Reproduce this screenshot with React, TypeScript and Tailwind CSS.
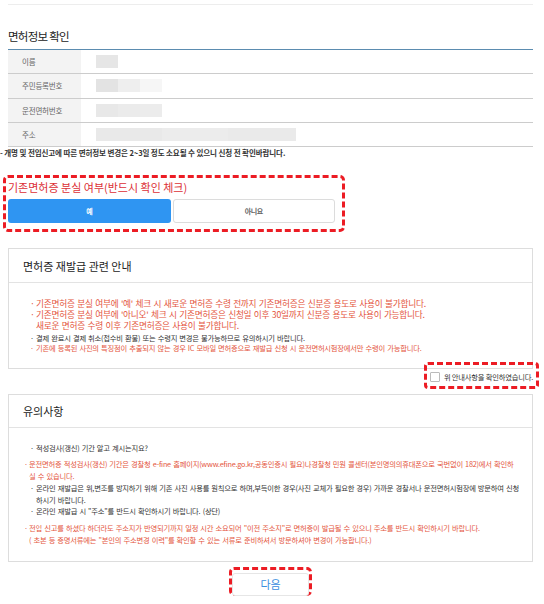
import type { ReactNode } from 'react';

const ROWS = [
  { label: '이름', blocks: [{ w: 22, cls: 'bg-[#e6e6e6]' }] },
  {
    label: '주민등록번호',
    blocks: [
      { w: 22, cls: 'bg-[#e3e3e3]' },
      { w: 22, cls: 'bg-[#eeeeee]' },
      { w: 22, cls: 'bg-[#f6f6f6]' },
    ],
  },
  {
    label: '운전면허번호',
    blocks: [
      { w: 22, cls: 'bg-[#e8e8e8]' },
      { w: 22, cls: 'bg-[#ebebeb]' },
      { w: 22, cls: 'bg-[#ececec]' },
    ],
  },
  {
    label: '주소',
    blocks: [
      { w: 66, cls: 'bg-[#e9e9e9]' },
      { w: 66, cls: 'bg-[#ececec]' },
      { w: 68, cls: 'bg-[#eaeaea]' },
    ],
  },
];

const SMALL = 'text-[7.3px] tracking-[-0.22px]';
const BIG_RED = 'text-[8.7px] leading-[11px] tracking-[-0.25px] text-[#e4553d]';

export default function App() {
  return (
    <div className="min-h-[604px] bg-white font-['Noto_Sans_CJK_KR','Noto_Sans',sans-serif] text-[#333]">
      <div className="ml-2 w-[525px] pt-[4px]">
        <div className="h-px bg-[#ededed]" />

        <h2 className="mt-[24px] text-[11.5px] leading-[14px] tracking-[-0.75px] text-[#222]">
          면허정보 확인
        </h2>

        <div className="mt-[6px] border-t border-[#5b8cb0]">
          {ROWS.map((row) => (
            <div key={row.label} className="flex h-[24.25px] border-b border-[#cccccc]">
              <div className="flex w-[73px] items-center bg-[#f3f3f3] pl-[14px] text-[7.5px] tracking-[-0.2px] text-[#666]">
                {row.label}
              </div>
              <div className="flex items-center pl-[15px]">
                {row.blocks.map((b, i) => (
                  <div
                    key={i}
                    className={`h-[13px] blur-[0.4px] ${b.cls}`}
                    style={{ width: b.w }}
                  />
                ))}
              </div>
            </div>
          ))}
        </div>

        <p className="-ml-2 mt-[1px] whitespace-nowrap text-[7.5px] font-bold leading-[10px] tracking-[-0.1px] text-[#333]">
          - 개명 및 전입신고에 따른 면허정보 변경은 2~3일 정도 소요될 수 있으니 신청 전 확인바랍니다.
        </p>

        {/* 분실 여부 */}
        <div className="-ml-[5px] mt-[17px] w-[342px] rounded-[5px] border-[3px] border-dashed border-[#ec1c24] pb-[6px] pl-[2px] pr-[7px] pt-[2px]">
          <p className="text-[11px] leading-[14px] text-[#dc2f36]">기존면허증 분실 여부(반드시 확인 체크)</p>
          <div className="mt-[5px] grid grid-cols-2 gap-[2px]">
            <button
              type="button"
              className="h-[24px] rounded-[3px] bg-[#2f95f2] text-[7px] font-bold tracking-[-0.4px] text-white"
            >
              예
            </button>
            <button
              type="button"
              className="h-[24px] rounded-[3px] border border-[#dcdcdc] bg-white text-[7px] font-bold tracking-[-0.4px] text-[#666]"
            >
              아니요
            </button>
          </div>
        </div>

        {/* 재발급 안내 */}
        <section className="mt-[16px] border border-[#dddddd]">
          <BoxHeader title="면허증 재발급 관련 안내" height="h-[34px]" />
          <div className="pb-[15px] pl-[21px] pt-[14.5px]">
            <Item className={BIG_RED}>
              기존면허증 분실 여부에 &apos;예&apos; 체크 시 새로운 면허증 수령 전까지 기존면허증은 신분증 용도로
              사용이 불가합니다.
            </Item>
            <Item className={BIG_RED}>
              기존면허증 분실 여부에 &apos;아니오&apos; 체크 시 기존면허증은 신청일 이후 30일까지 신분증 용도로
              사용이 가능합니다.
              <br />
              새로운 면허증 수령 이후 기존면허증은 사용이 불가합니다.
            </Item>
            <Item className={`mt-[2.5px] leading-[10px] text-[#333] ${SMALL}`}>
              결제 완료시 결제 취소(접수비 환불) 또는 수령지 변경은 불가능하므로 유의하시기 바랍니다.
            </Item>
            <Item className={`leading-[10px] text-[#e4553d] ${SMALL}`}>
              기존에 등록된 사진의 특징점이 추출되지 않는 경우 IC 모바일 면허증으로 재발급 신청 시
              운전면허시험장에서만 수령이 가능합니다.
            </Item>
          </div>
        </section>

        <div className="relative flex h-[25px] items-start justify-end pt-[3px]">
          <span className="mr-[4px] h-[10px] w-[10px] rounded-[1px] border border-[#bbbbbb] bg-white" />
          <span className={`leading-[10px] text-[#333] ${SMALL}`}>위 안내사항을 확인하였습니다.</span>
          <div className="pointer-events-none absolute left-[416px] top-[-7px] h-[27px] w-[115px] rounded-[4px] border-[3px] border-dashed border-[#ec1c24]" />
        </div>

        {/* 유의사항 */}
        <section className="border border-[#dddddd]">
          <BoxHeader title="유의사항" height="h-[33px]" />
          <div className="pb-[15px] pt-[14px]">
            <Note tone="dark" className="leading-[12px]">
              적성검사(갱신) 기간 알고 계시는지요?
            </Note>
            <Note tone="red" className="mt-[4px] leading-[12px]">
              운전면허증 적성검사(갱신) 기간은 경찰청 e-fine 홈페이지(www.efine.go.kr,공동인증시 필요)나경찰청 민원
              콜센터(본인명의의휴대폰으로 국번없이 182)에서 확인하
              <br />
              실 수 있습니다.
            </Note>
            <Note tone="dark" className="mt-[1px] leading-[11.5px]">
              온라인 재발급은 위,변조를 방지하기 위해 기존 사진 사용를 원칙으로 하며,부득이한 경우(사진 교체가 필요한
              경우) 가까운 경찰서나 운전면허시험장에 방문하여 신청
              <br />
              하시기 바랍니다.
            </Note>
            <Note tone="dark" className="leading-[11px]">
              온라인 재발급 시 &quot;주소&quot;를 반드시 확인하시기 바랍니다. (상단)
            </Note>
            <Note tone="red" className="mt-[4.5px] leading-[12px]">
              전입 신고를 하셨다 하더라도 주소지가 반영되기까지 일정 시간 소요되어 &quot;이전 주소지&quot;로 면허증이
              발급될 수 있으니 주소를 반드시 확인하시기 바랍니다.
              <br />( 초본 등 증명서류에는 &quot;본인의 주소변경 이력&quot;를 확인할 수 있는 서류로 준비하셔서
              방문하셔야 변경이 가능합니다.)
            </Note>
          </div>
        </section>

        <div className="mx-auto mt-[5px] h-[29px] w-[83px] rounded-[5px] border-[3px] border-dashed border-[#ec1c24]">
          <button
            type="button"
            className="h-full w-full rounded-[3px] border border-[#e6e6e6] bg-white text-[11px] leading-none text-[#3a8de0]"
          >
            다음
          </button>
        </div>
      </div>
    </div>
  );
}

function BoxHeader({ title, height }: { title: string; height: string }) {
  return (
    <div className={`flex items-center border-b border-[#e3e3e3] pl-[14px] ${height}`}>
      <h3 className="text-[11px] leading-[14px] text-[#222]">{title}</h3>
    </div>
  );
}

function Item({ children, className }: { children: ReactNode; className: string }) {
  return (
    <div className={`flex whitespace-nowrap ${className}`}>
      <span className="w-[6px] shrink-0">·</span>
      <span className="[word-spacing:0.8px]">{children}</span>
    </div>
  );
}

function Note({
  children,
  tone,
  className = '',
}: {
  children: ReactNode;
  tone: 'dark' | 'red';
  className?: string;
}) {
  const toneCls = tone === 'red' ? 'pl-[15px] text-[#e4553d]' : 'pl-[21px] text-[#333]';
  const bulletW = tone === 'red' ? 'w-[5px]' : 'w-[6px]';
  return (
    <div className={`flex whitespace-nowrap ${SMALL} ${toneCls} ${className}`}>
      <span className={`shrink-0 ${bulletW}`}>·</span>
      <span className="[word-spacing:0.8px]">{children}</span>
    </div>
  );
}
